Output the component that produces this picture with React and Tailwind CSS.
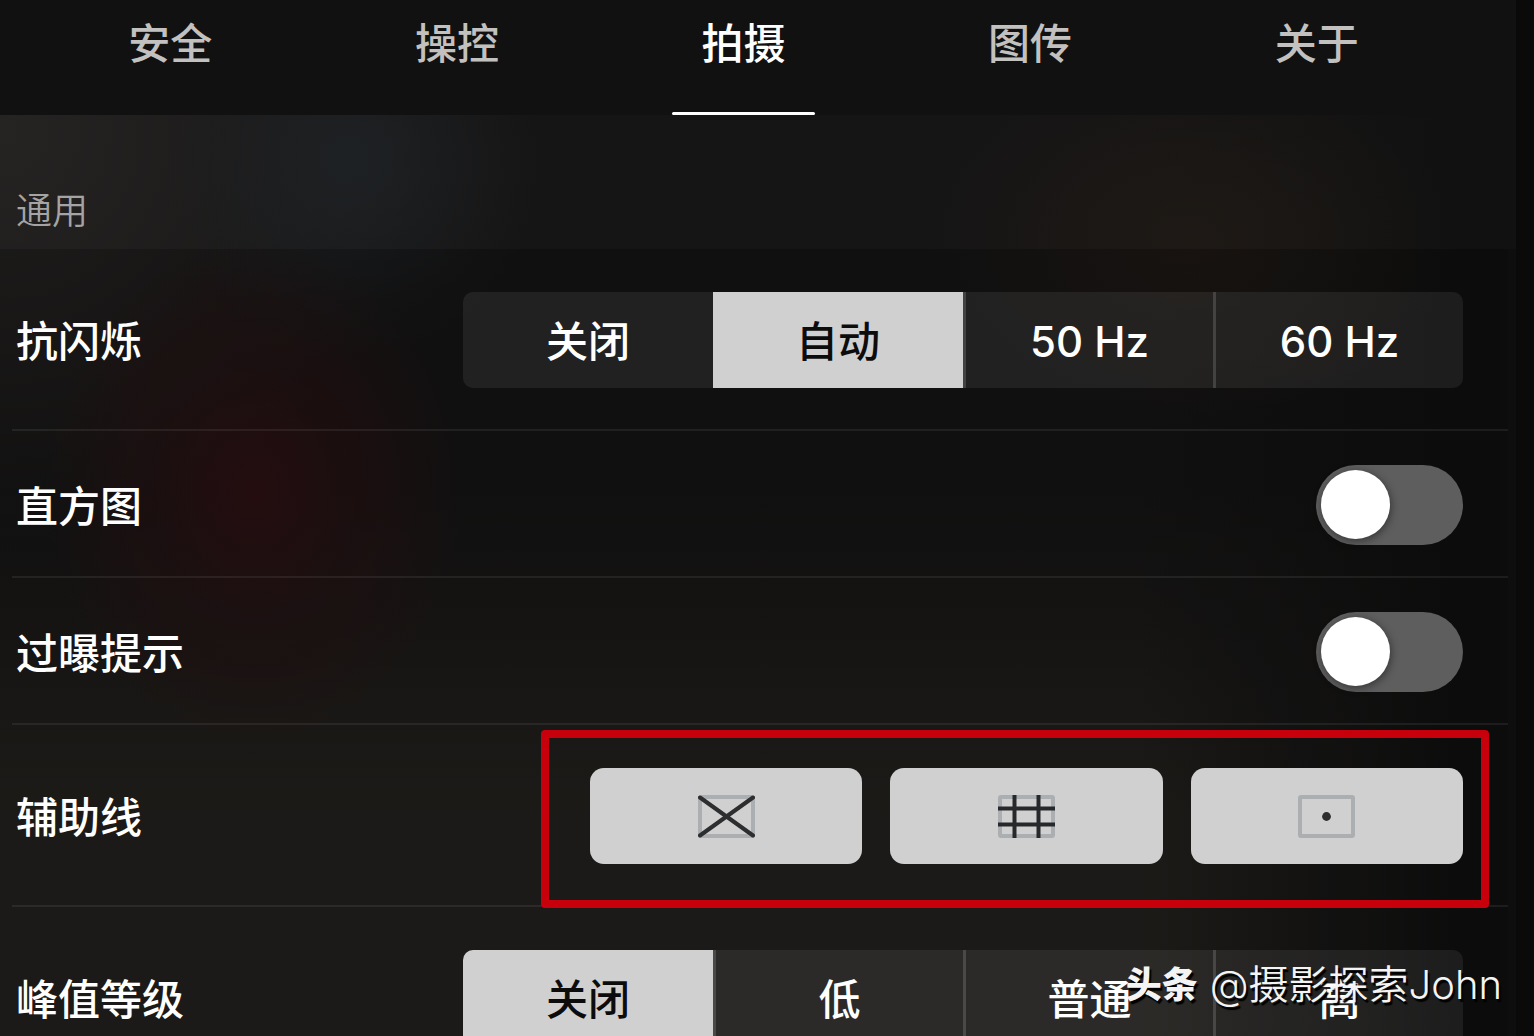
import { useState } from "react";

const TABS = ["安全", "操控", "拍摄", "图传", "关于"];

function Row({ label, htmlFor, labelClass = "flex-1", compact = false, children }) {
  const Label = htmlFor ? "label" : "span";
  return (
    <div
      className={
        "ml-3 flex items-center border-b-2 border-white/[0.07] pt-0.5 pr-[45px] pl-1 " +
        (compact ? "h-[147px]" : "h-[182px]")
      }
    >
      <Label
        htmlFor={htmlFor}
        className={"shrink-0 pt-1 text-[42px] leading-[60px] font-medium text-white " + labelClass}
      >
        {label}
      </Label>
      {children}
    </div>
  );
}

function Segmented({ label, options, initial }) {
  const [value, setValue] = useState(initial);
  return (
    <div
      role="radiogroup"
      aria-label={label}
      className="grid h-24 min-w-0 flex-1 grid-cols-4 overflow-hidden rounded-[10px] bg-white/[0.07]"
    >
      {options.map((option, i) => {
        const selected = option === value;
        return (
          <button
            key={option}
            type="button"
            role="radio"
            aria-checked={selected}
            onClick={() => setValue(option)}
            className={
              "pt-1 text-[42px] leading-[60px] font-medium " +
              (selected
                ? "bg-[#d0d0d0] text-[#0c0c0c]"
                : "text-white " + (i > 0 ? "border-l-3 border-white/15" : ""))
            }
          >
            {option}
          </button>
        );
      })}
    </div>
  );
}

function Toggle({ id }) {
  return (
    <input
      id={id}
      type="checkbox"
      role="switch"
      className="h-20 w-[147px] shrink-0 cursor-pointer appearance-none rounded-full bg-[#5e5e5e] p-[5px] before:block before:size-[69px] before:rounded-full before:bg-white before:shadow-[1px_2px_8px_rgba(0,0,0,0.45)] checked:bg-[#3a8f4f] checked:before:ml-auto"
    />
  );
}

function GuideIcon({ kind }) {
  return (
    <svg width="57" height="43" viewBox="0 0 57 43" fill="none" aria-hidden="true">
      <rect x="2" y="2" width="53" height="39" rx="1" stroke="#abafb1" strokeWidth="4" />
      {kind === "cross" && (
        <path d="M2 2.5 55 40.5M55 2.5 2 40.5" stroke="#2c2e30" strokeWidth="4" strokeLinecap="round" />
      )}
      {kind === "grid" && (
        <path d="M16.5 0V43M40.5 0V43M0 13.5H57M0 29.5H57" stroke="#26282b" strokeWidth="4" />
      )}
      {kind === "point" && <circle cx="28.5" cy="21.5" r="4.4" fill="#2c2d2f" />}
    </svg>
  );
}

function Guides() {
  const [on, setOn] = useState({ cross: true, grid: true, point: true });
  const items = [
    ["cross", "对角线"],
    ["grid", "网格线"],
    ["point", "中心点"],
  ];
  return (
    <div className="relative grid min-w-0 flex-1 grid-cols-3 gap-7">
      {items.map(([kind, name]) => (
        <button
          key={kind}
          type="button"
          aria-label={name}
          aria-pressed={on[kind]}
          onClick={() => setOn({ ...on, [kind]: !on[kind] })}
          className={
            "flex h-24 items-center justify-center rounded-[14px] " +
            (on[kind] ? "bg-[#d0d0d0]" : "bg-[#d0d0d0]/40")
          }
        >
          <GuideIcon kind={kind} />
        </button>
      ))}
      <div className="pointer-events-none absolute -top-[38px] -right-[26px] -bottom-[44px] -left-[49px] z-10 rounded-[4px] border-8 border-[#c8000b]" />
    </div>
  );
}

export default function App() {
  const [tab, setTab] = useState("拍摄");
  return (
    <div className="relative h-screen overflow-hidden bg-[#0a0a0a] pr-[18px] font-['Inter','Noto_Sans_CJK_SC',sans-serif]">
      <div className="min-h-full bg-[#131212] bg-[radial-gradient(ellipse_210px_250px_at_255px_490px,#280f11,transparent),radial-gradient(ellipse_190px_200px_at_350px_160px,#1b1e21,transparent),radial-gradient(ellipse_420px_420px_at_0px_130px,#232120,transparent),radial-gradient(ellipse_260px_180px_at_1190px_240px,#1b1612,transparent),linear-gradient(to_right,transparent_75%,#0e0e0e_96%),linear-gradient(to_bottom,transparent_45%,#201e1b_75%)]">
        <nav role="tablist" className="grid grid-cols-5 bg-[#111111] pr-14 pl-[27px]">
          {TABS.map((t) => (
            <button
              key={t}
              type="button"
              role="tab"
              aria-selected={t === tab}
              onClick={() => setTab(t)}
              className={
                "flex h-[115px] flex-col items-center justify-between pt-3.5 text-[42px] leading-[60px] font-medium " +
                (t === tab ? "text-white" : "text-[#c2c1c0]")
              }
            >
              {t}
              <span className={"h-[3px] w-1/2 rounded-full " + (t === tab ? "bg-white" : "")} />
            </button>
          ))}
        </nav>

        <h2 className="flex h-[134px] items-end bg-white/[0.015] pb-3 pl-4 text-[36px] leading-[52px] font-[350] text-[#a5a4a4]">
          通用
        </h2>

        <main className="mr-2 bg-black/10">
          <Row label="抗闪烁" labelClass="w-[447px]">
            <Segmented label="抗闪烁" options={["关闭", "自动", "50 Hz", "60 Hz"]} initial="自动" />
          </Row>
          <Row label="直方图" htmlFor="histogram" compact>
            <Toggle id="histogram" />
          </Row>
          <Row label="过曝提示" htmlFor="overexposure" compact>
            <Toggle id="overexposure" />
          </Row>
          <Row label="辅助线" labelClass="w-[574px]">
            <Guides />
          </Row>
          <Row label="峰值等级" labelClass="w-[447px]">
            <Segmented label="峰值等级" options={["关闭", "低", "普通", "高"]} initial="关闭" />
          </Row>
        </main>
      </div>

      <p className="pointer-events-none absolute right-8 bottom-[23px] z-20 flex items-center gap-3 text-[40px] leading-[56px] text-[#f4f4f4] [text-shadow:2px_3px_1px_#000]">
        <span className="text-[36px] font-black">头条</span>
        <span className="font-[350]">@摄影探索John</span>
      </p>
    </div>
  );
}
